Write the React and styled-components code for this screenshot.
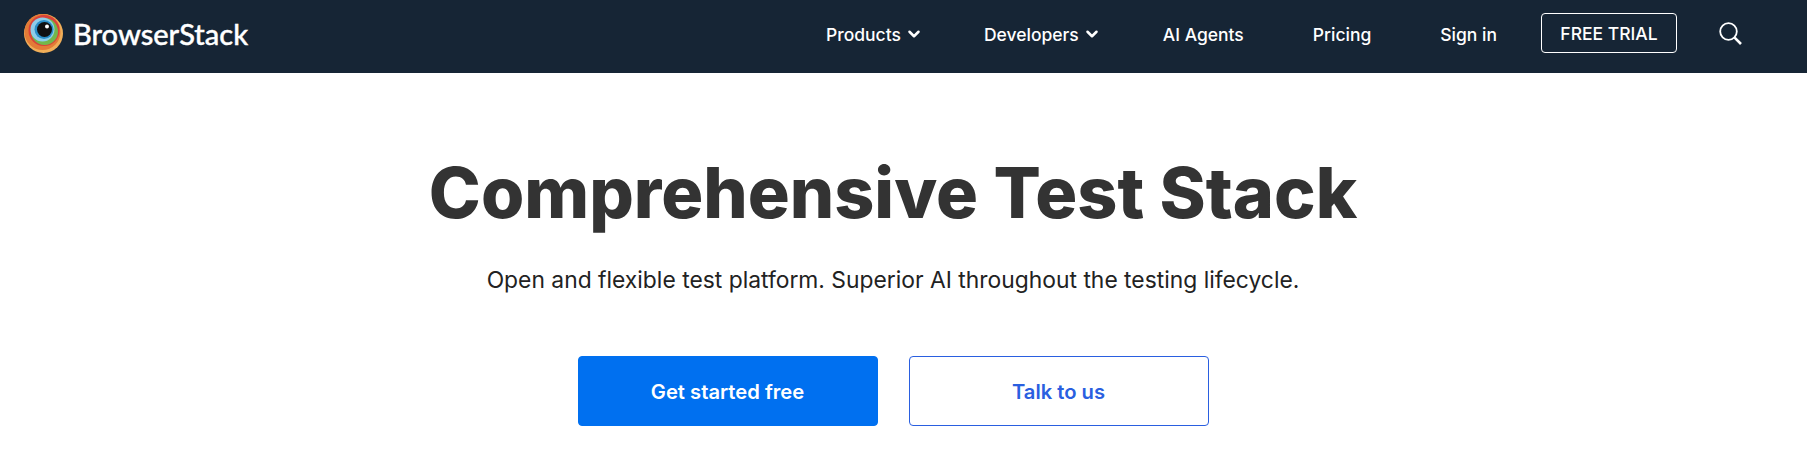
import React from 'react';
import styled, { createGlobalStyle } from 'styled-components';
import { ChevronDown } from 'lucide-react';

const GlobalStyle = createGlobalStyle`
  html, body {
    margin: 0;
    padding: 0;
    background: #fff;
    font-family: Inter, "Liberation Sans", sans-serif;
  }
`;

const Header = styled.header`
  height: 73px;
  background: #162535;
  display: flex;
  align-items: center;
  justify-content: space-between;
  padding: 0 65px 0 24px;
`;

const Logo = styled.a`
  display: flex;
  align-items: center;
  gap: 10px;
  color: #fff;
  font-family: Lato, sans-serif;
  font-size: 29px;
  font-weight: 500;
  -webkit-text-stroke: 0.4px #fff;
  margin-top: -7px;
`;

const Nav = styled.nav`
  display: flex;
  align-items: center;
  margin-top: -7px;
`;

const NavLink = styled.a`
  display: flex;
  align-items: center;
  gap: 4px;
  color: #fff;
  font-size: 17.5px;
  font-weight: 500;
  padding-top: 2px;
  margin-right: ${(p) => p.$gap}px;
`;

const TrialButton = styled.a`
  box-sizing: border-box;
  width: 136px;
  height: 40px;
  display: flex;
  align-items: center;
  justify-content: center;
  border: 1px solid #fff;
  border-radius: 4px;
  color: #fff;
  font-size: 17.5px;
  font-weight: 500;
  margin-right: 42px;
`;

const SearchButton = styled.span`
  display: flex;
  color: #fff;
`;

const Hero = styled.main`
  display: flex;
  flex-direction: column;
  align-items: center;
  padding: 76px 21px 0 0;
`;

const Title = styled.h1`
  margin: 0;
  color: #333;
  font-size: 70px;
  line-height: 88px;
  font-weight: 800;
`;

const Subtitle = styled.p`
  margin: 27px 0 0;
  color: #222;
  font-size: 22.85px;
  line-height: 32px;
`;

const Actions = styled.div`
  display: flex;
  gap: 31px;
  margin-top: 60px;
`;

const ActionButton = styled.a`
  box-sizing: border-box;
  width: 300px;
  height: 70px;
  display: flex;
  align-items: center;
  justify-content: center;
  border-radius: 4px;
  border: 1px solid ${(p) => (p.$primary ? '#0070f0' : '#2a5fe0')};
  background: ${(p) => (p.$primary ? '#0070f0' : '#fff')};
  color: ${(p) => (p.$primary ? '#fff' : '#2a5fe0')};
  font-size: 20.2px;
  font-weight: 600;
`;

const Eye = () => (
  <svg width="39" height="39" viewBox="0 0 39 39">
    <circle cx="19.5" cy="19.5" r="19.5" fill="#f0ae58" />
    <circle cx="18.5" cy="18" r="18" fill="#e37b37" />
    <circle cx="20" cy="16.5" r="15.5" fill="#d9423a" />
    <circle cx="20.5" cy="17.5" r="13.5" fill="#72b84b" />
    <circle cx="18.5" cy="15.5" r="12" fill="#8fcde8" />
    <circle cx="20" cy="15.5" r="9.5" fill="#2a8fc8" />
    <circle cx="20.5" cy="15.5" r="7.5" fill="#111" />
    <circle cx="23" cy="12.5" r="2" fill="#fff" />
  </svg>
);

const SearchIcon = () => (
  <svg width="23" height="23" viewBox="0 0 23 23" fill="none" stroke="currentColor">
    <circle cx="9.5" cy="9.5" r="8.3" strokeWidth="1.8" />
    <path d="M15.6 15.6L22 22" strokeWidth="2.6" />
  </svg>
);

export default function App() {
  return (
    <>
      <GlobalStyle />
      <Header>
        <Logo>
          <Eye />
          BrowserStack
        </Logo>
        <Nav>
          <NavLink $gap={61}>
            Products
            <ChevronDown size={18} strokeWidth={3.4} />
          </NavLink>
          <NavLink $gap={62}>
            Developers
            <ChevronDown size={18} strokeWidth={3.4} />
          </NavLink>
          <NavLink $gap={69}>AI Agents</NavLink>
          <NavLink $gap={69}>Pricing</NavLink>
          <NavLink $gap={44}>Sign in</NavLink>
          <TrialButton>FREE TRIAL</TrialButton>
          <SearchButton>
            <SearchIcon />
          </SearchButton>
        </Nav>
      </Header>
      <Hero>
        <Title>Comprehensive Test Stack</Title>
        <Subtitle>Open and flexible test platform. Superior AI throughout the testing lifecycle.</Subtitle>
        <Actions>
          <ActionButton $primary>Get started free</ActionButton>
          <ActionButton>Talk to us</ActionButton>
        </Actions>
      </Hero>
    </>
  );
}
